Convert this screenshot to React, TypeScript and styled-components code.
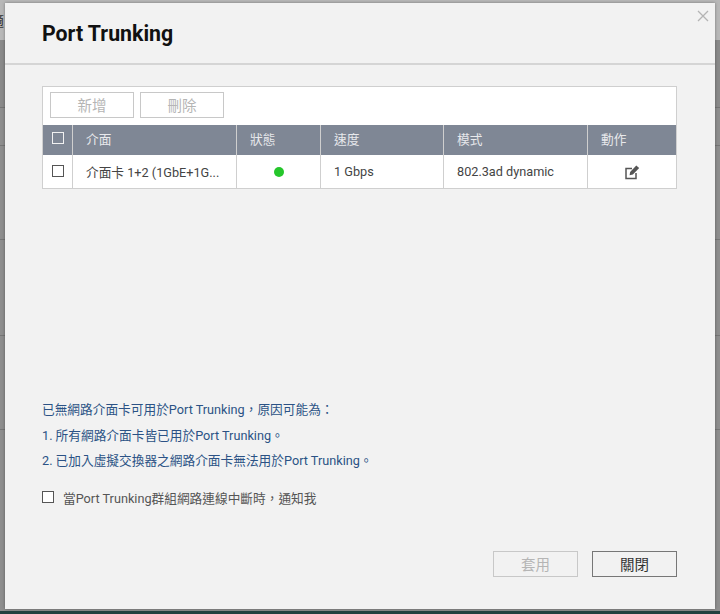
import React from "react";
import styled, { createGlobalStyle } from "styled-components";

const Global = createGlobalStyle`
  html, body { margin: 0; padding: 0; width: 720px; height: 614px; overflow: hidden; }
  body { font-family: Roboto, "Noto Sans CJK TC", sans-serif; }
`;
const Backdrop = styled.div`
  position: relative; overflow: hidden;
  width: 720px; height: 614px; box-sizing: border-box; padding: 3px 5px 2px 5px;
  background: linear-gradient(
    #b8b8b8 0 40px, #8a8a8a 40px 107px, #757575 107px 108px, #8e8e8e 108px 145px, #767676 145px 146px,
    #8e8e8e 146px 239px, #767676 239px 240px, #8e8e8e 240px 335px, #767676 335px 336px,
    #8e8e8e 336px 429px, #767676 429px 430px, #8e8e8e 430px 100%
  );
  display: flex; border-bottom: 3px solid #22403f;
`;
const BackdropGlyph = styled.span`
  position: absolute; left: -10px; top: 11px; font: 14px/18px "Noto Sans CJK TC", sans-serif; color: #333;
`;
const Dialog = styled.div`
  flex: 1; position: relative; background: #f2f2f2; display: flex; flex-direction: column;
  box-shadow: 0 0 3px rgba(0,0,0,.35);
`;
const Header = styled.div`
  height: 62px; box-sizing: border-box; padding: 17px 0 0 37px; border-bottom: 2px solid #d5d5d5;
`;
const Title = styled.h1`
  margin: 0; font-size: 21.3px; line-height: 28px; font-weight: 700; color: #111;
`;
const Close = styled.button`
  position: absolute; top: 6px; right: 5px; width: 14px; height: 14px; padding: 0; border: 0; background: none; color: #b4b4b4; display: flex;
`;
const Body = styled.div`
  flex: 1; display: flex; flex-direction: column; padding: 21px 38px 0 37px;
`;
const TablePanel = styled.div`
  border: 1px solid #cfcfcf; background: #fff; height: 103px; box-sizing: border-box; display: flex; flex-direction: column;
`;
const Toolbar = styled.div`
  height: 38px; flex: none; box-sizing: border-box; padding: 5px 7px; display: flex; gap: 6px;
`;
const ToolButton = styled.button`
  width: 84px; height: 26px; box-sizing: border-box; border: 1px solid #c8c8c8; background: #fff; color: #b5b5b5;
  font: 14.5px/22px "Noto Sans CJK TC", sans-serif; padding: 0;
`;
const Row = styled.div<{ $head?: boolean }>`
  display: grid; grid-template-columns: 29px 164px 84px 123px 144px 1fr; flex: ${p => (p.$head ? "none" : 1)};
  height: ${p => (p.$head ? "30px" : "auto")};
  background: ${p => (p.$head ? "#7f8795" : "#fff")}; color: ${p => (p.$head ? "#e8e9ec" : "#444")};
`;
const Cell = styled.div<{ $head?: boolean; $center?: boolean }>`
  display: flex; align-items: center; justify-content: ${p => (p.$center ? "center" : "flex-start")};
  padding-left: ${p => (p.$center ? "0" : "13px")}; padding-bottom: ${p => (p.$head ? "3px" : "0")};
  font-size: 12.7px; white-space: nowrap; overflow: hidden;
  & + & { border-left: 1px solid ${p => (p.$head ? "#a5abb6" : "#cfcfcf")}; }
`;
const Check = styled.span<{ $light?: boolean }>`
  width: 10px; height: 10px; flex: none; display: block; border: 1px solid ${p => (p.$light ? "#f1f1f1" : "#555")};
  background: ${p => (p.$light ? "transparent" : "#fff")};
  margin-top: -2px;
`;
const Dot = styled.span`
  width: 10px; height: 10px; border-radius: 50%; background: #25c62b; display: block;
`;
const Notes = styled.div`
  margin-top: 208px; color: #2b5285; font-size: 12.7px; display: flex; flex-direction: column;
`;
const Note = styled.div`
  height: 25.5px; line-height: 25.5px; white-space: nowrap;
`;
const Notify = styled.label`
  margin-top: 12px; display: flex; align-items: center; gap: 9px; color: #555; font-size: 12.7px; height: 24px;
`;
const Footer = styled.div`
  display: flex; justify-content: flex-end; gap: 14px; padding: 0 38px 32px 0;
`;
const FootButton = styled.button<{ $primary?: boolean }>`
  width: 85px; height: 26px; box-sizing: border-box; padding: 0; background: transparent;
  border: 1px solid ${p => (p.$primary ? "#777" : "#c8c8c8")}; color: ${p => (p.$primary ? "#333" : "#b5b5b5")};
  font: 14.5px/22px "Noto Sans CJK TC", sans-serif;
`;

export default function App() {
  return (
    <>
      <Global />
      <Backdrop lang="zh-Hant">
        <BackdropGlyph>適</BackdropGlyph>
        <Dialog>
          <Header><Title>Port Trunking</Title></Header>
          <Close aria-label="close">
            <svg width="14" height="14" viewBox="0 0 14 14" fill="none" stroke="currentColor" strokeWidth="1.3"><path d="M2 2l10 10M12 2L2 12" /></svg>
          </Close>
          <Body>
            <TablePanel>
              <Toolbar>
                <ToolButton>新增</ToolButton>
                <ToolButton>刪除</ToolButton>
              </Toolbar>
              <Row $head>
                <Cell $head $center><Check $light /></Cell>
                <Cell $head>介面</Cell>
                <Cell $head>狀態</Cell>
                <Cell $head>速度</Cell>
                <Cell $head>模式</Cell>
                <Cell $head>動作</Cell>
              </Row>
              <Row>
                <Cell $center><Check /></Cell>
                <Cell>介面卡 1+2 (1GbE+1G...</Cell>
                <Cell $center><Dot /></Cell>
                <Cell>1 Gbps</Cell>
                <Cell>802.3ad dynamic</Cell>
                <Cell $center>
                  <svg width="16" height="16" viewBox="0 0 16 16" fill="none">
                    <path d="M8 4.6H2v10h10V9" stroke="#555" strokeWidth="1.5" />
                    <path d="M5.6 11.2l.5-3.1 6.2-6.6 2.9 2.4-6.3 6.7z" fill="#555" />
                  </svg>
                </Cell>
              </Row>
            </TablePanel>
            <Notes>
              <Note>已無網路介面卡可用於Port Trunking，原因可能為：</Note>
              <Note>1. 所有網路介面卡皆已用於Port Trunking。</Note>
              <Note>2. 已加入虛擬交換器之網路介面卡無法用於Port Trunking。</Note>
            </Notes>
            <Notify><Check />當Port Trunking群組網路連線中斷時，通知我</Notify>
          </Body>
          <Footer>
            <FootButton>套用</FootButton>
            <FootButton $primary>關閉</FootButton>
          </Footer>
        </Dialog>
      </Backdrop>
    </>
  );
}
